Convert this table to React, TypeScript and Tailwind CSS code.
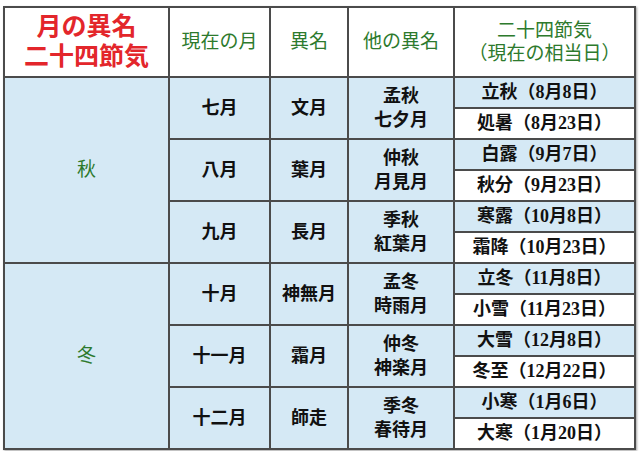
import React from 'react';

type Month = { name: string; alt: string; others: [string, string]; terms: [string, string] };
type Season = { name: string; months: Month[] };

const seasons: Season[] = [
  {
    name: '秋',
    months: [
      { name: '七月', alt: '文月', others: ['孟秋', '七夕月'], terms: ['立秋（8月8日）', '処暑（8月23日）'] },
      { name: '八月', alt: '葉月', others: ['仲秋', '月見月'], terms: ['白露（9月7日）', '秋分（9月23日）'] },
      { name: '九月', alt: '長月', others: ['季秋', '紅葉月'], terms: ['寒露（10月8日）', '霜降（10月23日）'] },
    ],
  },
  {
    name: '冬',
    months: [
      { name: '十月', alt: '神無月', others: ['孟冬', '時雨月'], terms: ['立冬（11月8日）', '小雪（11月23日）'] },
      { name: '十一月', alt: '霜月', others: ['仲冬', '神楽月'], terms: ['大雪（12月8日）', '冬至（12月22日）'] },
      { name: '十二月', alt: '師走', others: ['季冬', '春待月'], terms: ['小寒（1月6日）', '大寒（1月20日）'] },
    ],
  },
];

const font = { fontFamily: '"Liberation Serif", "Noto Sans CJK JP", serif' };

const cell = 'flex items-center justify-center text-center';
const body = `${cell} bg-[#d5e9f5] text-[18px] font-bold text-[#111]`;
const head = `${cell} bg-white text-[19px] text-[#2d7a2d] leading-[1.22]`;

export default function App() {
  return (
    <div className="w-[640px] h-[451px] bg-white pt-[6px] pl-[3px]" style={font}>
      <div className="grid w-[633px] grid-cols-[163px_99px_76px_104px_179px] grid-rows-[68px_repeat(12,29px)] gap-[2px] bg-[#4b4b4b] p-[2px] shadow-[1px_1px_2px_rgba(0,0,0,0.35)]">
        <div className={`${cell} flex-col bg-white text-[25px] font-bold leading-[1.2] text-[#e3262b]`}>
          <span>月の異名</span>
          <span>二十四節気</span>
        </div>
        <div className={head}>現在の月</div>
        <div className={head}>異名</div>
        <div className={head}>他の異名</div>
        <div className={`${head} flex-col`}>
          <span>二十四節気</span>
          <span>（現在の相当日）</span>
        </div>

        {seasons.map((s, si) => (
          <React.Fragment key={s.name}>
            <div
              className={`${cell} bg-[#d5e9f5] text-[19px] text-[#2d7a2d] ${si === 0 ? 'row-start-2 row-span-6' : 'row-start-8 row-span-6'} col-start-1`}
            >
              {s.name}
            </div>
            {s.months.map((m) => (
              <React.Fragment key={m.name}>
                <div className={`${body} row-span-2`}>{m.name}</div>
                <div className={`${body} row-span-2`}>{m.alt}</div>
                <div className={`${body} row-span-2 flex-col leading-[1.35]`}>
                  <span>{m.others[0]}</span>
                  <span>{m.others[1]}</span>
                </div>
                <div className={`${body} col-start-5`}>{m.terms[0]}</div>
                <div className={`${body} col-start-5 bg-white`}>{m.terms[1]}</div>
              </React.Fragment>
            ))}
          </React.Fragment>
        ))}
      </div>
    </div>
  );
}
